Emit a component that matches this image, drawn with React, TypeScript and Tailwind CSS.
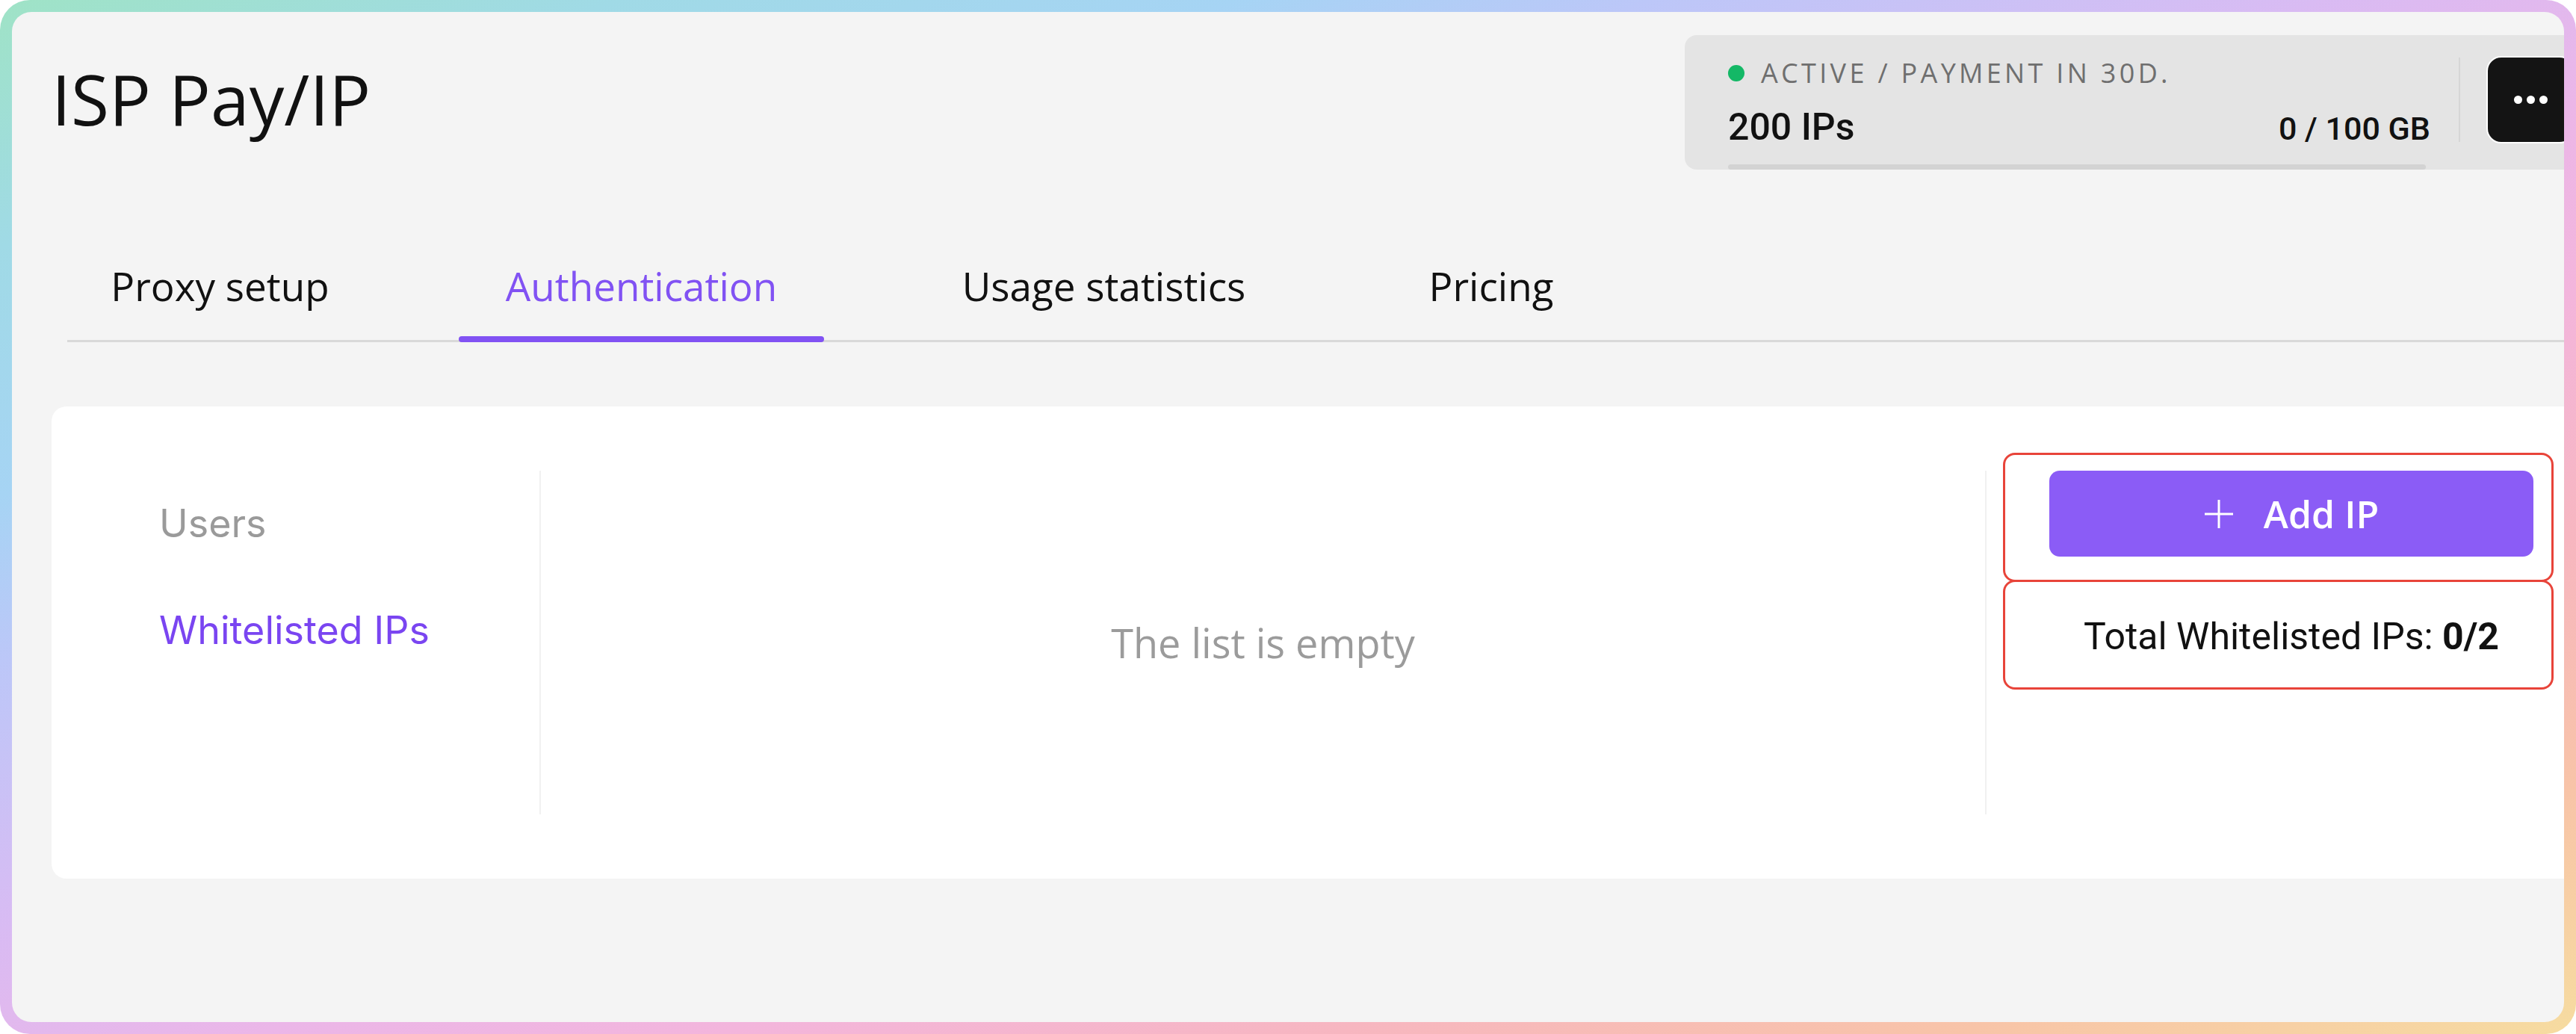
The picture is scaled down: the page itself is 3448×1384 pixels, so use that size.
const TABS = [
  { label: 'Proxy setup', width: 'w-[409px]', active: false },
  { label: 'Authentication', width: 'w-[489px]', active: true },
  { label: 'Usage statistics', width: 'w-[519px]', active: false },
  { label: 'Pricing', width: 'w-[288px]', active: false },
];

function StatusBox() {
  return (
    <div className="w-[1222px] h-[180px] rounded-[16px] bg-[#e4e4e4] flex pl-[58px] pr-[31px] overflow-hidden">
      <div className="w-[940px] flex flex-col pt-[29px]">
        <div className="h-[44px] flex items-center gap-[22px]">
          <span className="w-[22px] h-[22px] rounded-full bg-[#14b866]" />
          <span className="font-['Open_Sans',sans-serif] font-medium text-[36px] leading-none tracking-[0.12em] text-[#6f6f6f]">
            ACTIVE / PAYMENT IN 30D.
          </span>
        </div>
        <div className="mt-[25px] h-[50px] flex items-baseline justify-between font-['Roboto',sans-serif] font-medium text-[#111]">
          <span className="text-[50px] leading-none">200 IPs</span>
          <span className="text-[43px] leading-none">0 / 100 GB</span>
        </div>
        <div className="mt-[25px] w-[934px] h-[7px] rounded-full bg-[#d3d3d3]" />
      </div>
      <div className="ml-[38px] mt-[30px] w-[2px] h-[113px] bg-[#d6d6d6]" />
      <button className="ml-[35px] mt-[28px] w-[118px] h-[117px] shrink-0 rounded-[20px] bg-[#141414] border-2 border-white flex items-center justify-center gap-[6px]">
        <span className="w-[11px] h-[11px] rounded-full bg-white" />
        <span className="w-[11px] h-[11px] rounded-full bg-white" />
        <span className="w-[11px] h-[11px] rounded-full bg-white" />
      </button>
    </div>
  );
}

export default function App() {
  return (
    <div className="w-[3448px] h-[1384px] rounded-[40px] p-[16px] bg-[linear-gradient(to_bottom_right,#9fe3c6_0%,#a0dae6_12%,#a6d4f4_24%,#bcc7f8_32%,#d9bbf3_45%,#ebb6e8_55%,#f3b5dc_64%,#f7b6c0_76%,#f8c4a8_88%,#f6dca0_100%)]">
      <div className="h-full rounded-[26px] bg-[#f4f4f4] overflow-hidden">
        <div className="w-[3408px] ml-[53px] pt-[31px]">
          {/* header */}
          <div className="flex items-start justify-between">
            <h1 className="mt-[39px] font-['Open_Sans',sans-serif] font-medium text-[93px] leading-none text-[#111]">
              ISP Pay/IP
            </h1>
            <StatusBox />
          </div>

          {/* tabs */}
          <div className="mt-[129px] ml-[21px] flex gap-[115px] border-b-[3px] border-[#d9d9d9]">
            {TABS.map((t) => (
              <div
                key={t.label}
                className={`relative ${t.width} pb-[46px] text-center font-['Open_Sans',sans-serif] font-medium text-[53px] leading-none ${
                  t.active ? 'text-[#8152f3]' : 'text-[#111]'
                }`}
              >
                {t.label}
                {t.active && (
                  <span className="absolute left-0 right-0 -bottom-[3px] h-[8px] rounded-full bg-[#8152f3]" />
                )}
              </div>
            ))}
          </div>

          {/* card */}
          <div className="mt-[86px] rounded-[20px] bg-white py-[86px] flex">
            <div className="w-[655px] h-[460px] border-r-2 border-[#f1f1f1] pl-[144px] pt-[45px] flex flex-col font-['Inter',sans-serif] text-[52px] leading-none">
              <span className="text-[#9a9a9a]">Users</span>
              <span className="mt-[91px] text-[#7a45f1]">Whitelisted IPs</span>
            </div>
            <div className="flex-1 flex items-center justify-center">
              <span className="font-['Open_Sans',sans-serif] font-medium text-[54px] leading-none text-[#9b9b9b]">
                The list is empty
              </span>
            </div>
            <div className="relative w-[820px] border-l-2 border-[#f1f1f1] pl-[84px] pr-[86px]">
              <button className="w-[648px] h-[115px] rounded-[14px] bg-[#8b5cf6] flex items-center justify-center gap-[40px] text-white">
                <svg width="40" height="40" viewBox="0 0 40 40" fill="none" stroke="currentColor" strokeWidth="3">
                  <path d="M20 1v38M1 20h38" />
                </svg>
                <span className="font-['Open_Sans',sans-serif] font-semibold text-[50px] leading-none">Add IP</span>
              </button>
              <p className="mt-[82px] text-center font-['Roboto',sans-serif] text-[50px] leading-none text-[#111]">
                Total Whitelisted IPs: <span className="font-bold">0/2</span>
              </p>
              <div className="absolute left-[22px] -top-[24px] w-[737px] h-[173px] rounded-[16px] border-[3px] border-[#e8443a]" />
              <div className="absolute left-[22px] top-[146px] w-[737px] h-[147px] rounded-[16px] border-[3px] border-[#e8443a]" />
            </div>
          </div>
        </div>
      </div>
    </div>
  );
}
